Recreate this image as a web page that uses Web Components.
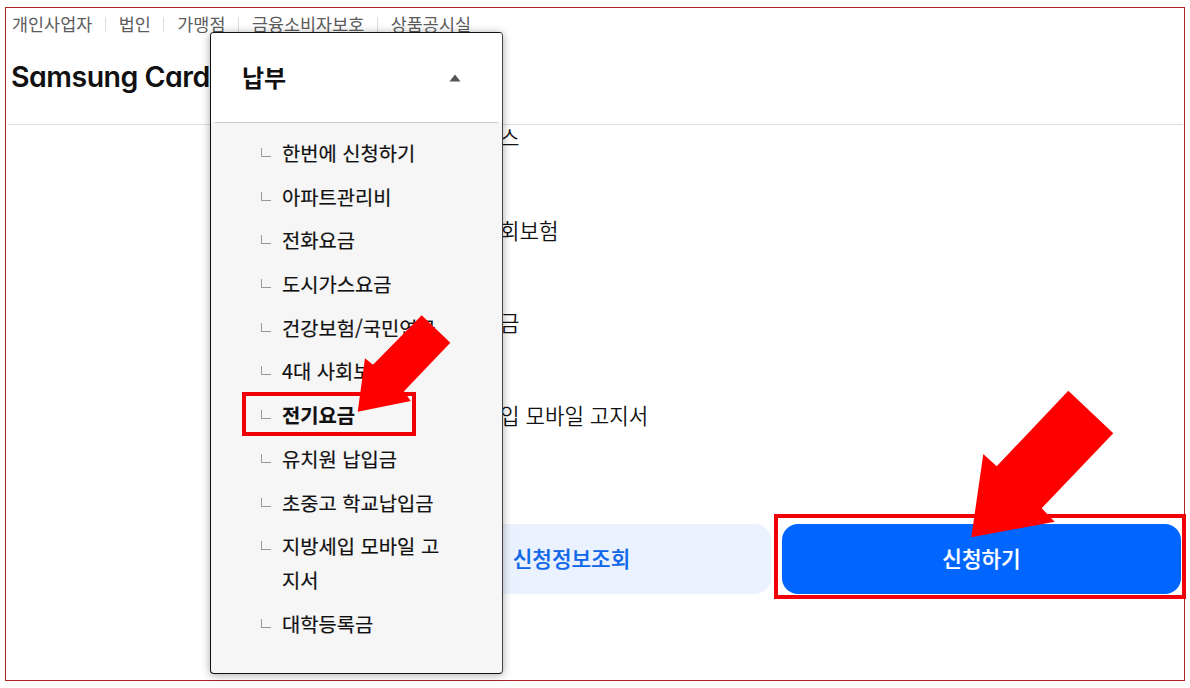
<!DOCTYPE html>
<html lang="ko">
<head>
<meta charset="utf-8">
<title>Samsung Card</title>
<style>
    body {
        margin: 0;
        width: 1190px;
        height: 688px;
        overflow: hidden;
        position: relative;
        background: #fff;
        color: #111;
        font-family: "Noto Sans CJK KR", "Noto Sans", sans-serif;
    }
</style>
</head>
<body>
<card-page>
    <card-header slot="header">
        <util-link>개인사업자</util-link>
        <util-link>법인</util-link>
        <util-link>가맹점</util-link>
        <util-link>금융소비자보호</util-link>
        <util-link>상품공시실</util-link>
    </card-header>
    <service-list>
        <service-row>스</service-row>
        <service-row>회보험</service-row>
        <service-row>금</service-row>
        <service-row>입 모바일 고지서</service-row>
    </service-list>
    <action-bar>
        <card-button>신청정보조회</card-button>
        <card-button primary>신청하기</card-button>
    </action-bar>
</card-page>

<side-menu label="납부">
    <menu-item>한번에 신청하기</menu-item>
    <menu-item>아파트관리비</menu-item>
    <menu-item>전화요금</menu-item>
    <menu-item>도시가스요금</menu-item>
    <menu-item>건강보험/국민연금</menu-item>
    <menu-item>4대 사회보험</menu-item>
    <menu-item active>전기요금</menu-item>
    <menu-item>유치원 납입금</menu-item>
    <menu-item>초중고 학교납입금</menu-item>
    <menu-item>지방세입 모바일 고지서</menu-item>
    <menu-item>대학등록금</menu-item>
</side-menu>

<mark-box style="left:242px;top:392px;width:174px;height:44px"></mark-box>
<mark-box style="left:774px;top:514px;width:412px;height:85px"></mark-box>
<mark-arrows></mark-arrows>

<script>
// Attach an open shadow root filled with the given markup
function define(name, html, setup) {
    const template = document.createElement('template');
    template.innerHTML = html;

    customElements.define(name, class extends HTMLElement {
        constructor() {
            super();
            this.attachShadow({ mode: 'open' });
            this.shadowRoot.appendChild(template.content.cloneNode(true));
        }

        connectedCallback() {
            if (setup) setup(this);
        }
    });
}

define('card-page', `
<style>
    :host {
        display: block;
        box-sizing: border-box;
        width: 1180px;
        height: 674px;
        margin: 7px 0 0 5px;
        border: 1px solid #a82226;
    }
    :host, main { overflow: hidden; }
</style>
<slot name="header"></slot>
<main><slot></slot></main>
`);

define('card-header', `
<style>
    :host {
        display: block;
        box-sizing: border-box;
        height: 117px;
        margin: 0 1px 0 2px;
        border-bottom: 1px solid #ddd;
    }
    nav {
        display: flex;
        padding-left: 4px;
        height: 32px;
        align-items: center;
    }
    .logo {
        padding: 18px 0 0 3px;
        font: 600 28.5px/38px Inter, sans-serif;
        font-feature-settings: "cv11";
        letter-spacing: -0.5px;
        white-space: nowrap;
        color: #111;
    }
</style>
<nav><slot></slot></nav>
<div class="logo">Samsung Card</div>
`);

define('util-link', `
<style>
    :host {
        display: flex;
        align-items: center;
        font-size: 17.45px;
        line-height: 24px;
        color: #5c5c5c;
        white-space: nowrap;
    }
    :host(:not(:last-child))::after {
        content: "";
        width: 1px;
        height: 15px;
        margin: 0 13px 0 12.5px;
        background: #ddd;
    }
</style>
<slot></slot>
`);

define('service-list', `
<style>
    :host {
        display: flex;
        flex-direction: column;
        gap: 65.5px;
        padding-left: 494px;
        margin-top: -2px;
    }
</style>
<slot></slot>
`);

define('service-row', `
<style>
    :host {
        display: block;
        font-size: 21.2px;
        line-height: 27px;
        font-weight: 350;
        white-space: nowrap;
    }
</style>
<slot></slot>
`);

define('action-bar', `
<style>
    :host {
        display: flex;
        justify-content: flex-end;
        gap: 11px;
        padding: 96.5px 3px 0 0;
    }
</style>
<slot></slot>
`);

define('card-button', `
<style>
    :host { display: block; }
    button {
        display: block;
        width: 399px;
        height: 70px;
        padding: 0 0 3px;
        border: 0;
        border-radius: 16px;
        background: #ebf2ff;
        color: #0f68ea;
        font: inherit;
        font-size: 21.3px;
        font-weight: 500;
        -webkit-text-stroke: 0.2px;
    }
    :host([primary]) button {
        background: #06f;
        color: #fff;
    }
</style>
<button><slot></slot></button>
`);

define('side-menu', `
<style>
    :host {
        position: absolute;
        left: 210px;
        top: 32px;
        box-sizing: border-box;
        width: 292.5px;
        height: 642px;
        border: 1px solid #111;
        border-right-color: #444;
        border-radius: 4px;
        background: #f6f6f6;
        box-shadow: 0 1px 8px rgba(0, 0, 0, .35);
        overflow: hidden;
    }
    header {
        display: flex;
        align-items: center;
        justify-content: space-between;
        height: 89px;
        padding: 0 41px 0 31px;
        background: #fff;
    }
    hr {
        height: 1px;
        margin: 0 4px;
        border: 0;
        background: #ccc;
    }
    h2 {
        margin: -2px 0 0;
        font-size: 24px;
        line-height: 36px;
        font-weight: 700;
    }
    .list {
        display: flex;
        flex-direction: column;
        gap: 9.72px;
        padding: 12.8px 56px 0 49px;
    }
</style>
<header>
    <h2></h2>
    <svg width="12" height="8" viewBox="0 0 12 8"><path d="M6 .5 11.5 7.5H.5z" fill="#555"/></svg>
</header>
<hr>
<div class="list"><slot></slot></div>
`, el => {
    el.shadowRoot.querySelector('h2').textContent = el.getAttribute('label') || '';
});

define('menu-item', `
<style>
    :host {
        display: flex;
        font-size: 19.85px;
        line-height: 34px;
        font-weight: 400;
        -webkit-text-stroke: 0.2px;
        word-break: break-all;
    }
    :host([active]) { font-weight: 700; }
    i {
        flex: none;
        box-sizing: border-box;
        width: 10px;
        height: 9px;
        margin: 12px 11px 0 1px;
        border: solid #999;
        border-width: 0 0 1px 1px;
    }
</style>
<i></i><span><slot></slot></span>
`);

define('mark-box', `
<style>
    :host {
        position: absolute;
        box-sizing: border-box;
        border: 4px solid #f20008;
    }
</style>
`);

define('mark-arrows', `
<style>
    :host {
        position: absolute;
        left: 0;
        top: 0;
    }
    svg { display: block; }
</style>
<svg width="1190" height="688" fill="#f00">
    <path d="M421.7 315.3 450.3 342.7 404 391.3 410.7 401 357.7 411.7 365 358.3 373 364.7z"/>
    <path d="M1068.3 390.7 1113.3 433.3 1041.7 508.3 1054.7 521.7 971.3 537.3 983.3 454 996.7 466.3z"/>
</svg>
`);
</script>
</body>
</html>
